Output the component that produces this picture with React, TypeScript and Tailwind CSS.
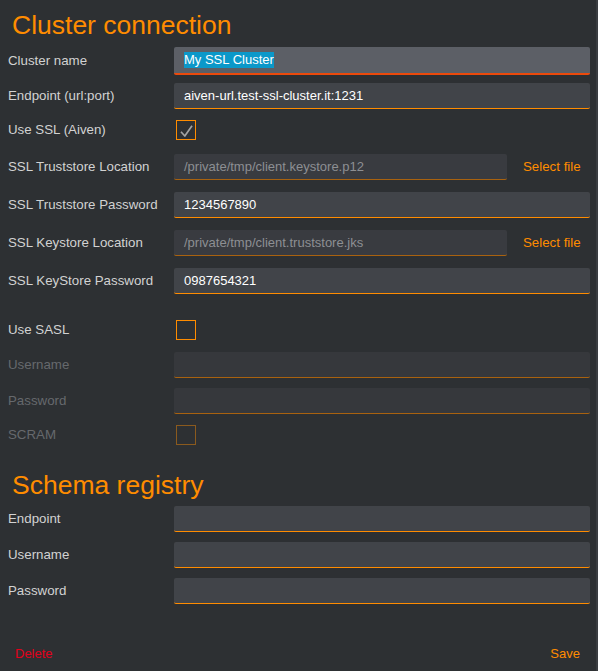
import React from 'react';

type FieldVariant = 'normal' | 'focused' | 'readonly' | 'disabled';

const fieldClasses: Record<FieldVariant, string> = {
  normal: 'h-[26px] bg-[#414449] border-b border-[#ff8c00] text-white',
  focused: 'h-[28px] bg-[#5c5f66] border-b-2 border-[#ec4a0c] text-white',
  readonly: 'h-[26px] bg-[#393b40] border-b border-[#a9620f] text-[#8d8f93]',
  disabled: 'h-[26px] bg-[#36383c] border-b border-[#a9620f] text-[#8d8f93]',
};

const Field: React.FC<{ variant?: FieldVariant; className?: string; children?: React.ReactNode }> = ({
  variant = 'normal',
  className = '',
  children,
}) => (
  <div className={`flex items-center rounded-[2px] pl-[10px] text-[13px] leading-4 ${fieldClasses[variant]} ${className}`}>
    {children}
  </div>
);

const Row: React.FC<{ label: string; disabled?: boolean; className?: string; children: React.ReactNode }> = ({
  label,
  disabled,
  className = '',
  children,
}) => (
  <div className={`flex items-center ${className}`}>
    <div className={`w-[166px] shrink-0 text-[13.3px] leading-4 ${disabled ? 'text-[#66696d]' : 'text-[#d2d2d2]'}`}>
      {label}
    </div>
    <div className="flex flex-1 items-center">{children}</div>
  </div>
);

const Checkbox: React.FC<{ checked?: boolean; disabled?: boolean }> = ({ checked, disabled }) => (
  <div
    className={`ml-[2px] flex h-5 w-5 items-center justify-center border-[1.5px] ${
      disabled ? 'border-[#8a5a1e]' : 'border-[#ff8c00]'
    }`}
  >
    {checked && (
      <svg width="17" height="17" viewBox="0 0 20 20">
        <path d="M3.5 11.5 L8 16.5 L16.5 4.5" fill="none" stroke="#a3a3a3" strokeWidth="2" strokeLinejoin="round" />
      </svg>
    )}
  </div>
);

const SelectFile: React.FC = () => (
  <span className="ml-4 text-[13.3px] leading-4 text-[#ff8c00]">Select file</span>
);

export default function App() {
  return (
    <div
      className="min-h-[671px] w-full border-r-2 border-[#3a3d41] bg-[#2d3033] pl-2 pr-[6px] pt-[11px]"
      style={{ fontFamily: '"Liberation Sans", Arial, sans-serif' }}
    >
      {/* Cluster connection */}
      <h1 className="h-7 pl-1 text-[26.5px] leading-7 font-normal text-[#ff8c00]">Cluster connection</h1>

      <Row label="Cluster name" className="mt-2">
        <Field variant="focused" className="w-full">
          <span className="bg-[#0b98c9] text-white">My SSL Cluster</span>
        </Field>
      </Row>

      <Row label="Endpoint (url:port)" className="mt-2">
        <Field className="w-full">aiven-url.test-ssl-cluster.it:1231</Field>
      </Row>

      <Row label="Use SSL (Aiven)" className="mt-[11px]">
        <Checkbox checked />
      </Row>

      <Row label="SSL Truststore Location" className="mt-[14px]">
        <Field variant="readonly" className="w-[333px]">/private/tmp/client.keystore.p12</Field>
        <SelectFile />
      </Row>

      <Row label="SSL Truststore Password" className="mt-3">
        <Field className="w-full">1234567890</Field>
      </Row>

      <Row label="SSL Keystore Location" className="mt-3">
        <Field variant="readonly" className="w-[333px]">/private/tmp/client.truststore.jks</Field>
        <SelectFile />
      </Row>

      <Row label="SSL KeyStore Password" className="mt-3">
        <Field className="w-full">0987654321</Field>
      </Row>

      {/* SASL */}
      <Row label="Use SASL" className="mt-[26px]">
        <Checkbox />
      </Row>

      <Row label="Username" disabled className="mt-3">
        <Field variant="disabled" className="w-full" />
      </Row>

      <Row label="Password" disabled className="mt-[10px]">
        <Field variant="disabled" className="w-full" />
      </Row>

      <Row label="SCRAM" disabled className="mt-[11px]">
        <Checkbox disabled />
      </Row>

      {/* Schema registry */}
      <h2 className="mt-[26px] h-7 pl-1 text-[26.5px] leading-7 font-normal text-[#ff8c00]">Schema registry</h2>

      <Row label="Endpoint" className="mt-[7px]">
        <Field className="w-full" />
      </Row>

      <Row label="Username" className="mt-[10px]">
        <Field className="w-full" />
      </Row>

      <Row label="Password" className="mt-[10px]">
        <Field className="w-full" />
      </Row>

      <div className="mt-[42px] flex items-center justify-between pl-[7px] pr-[10px] text-[13px] leading-4">
        <button className="text-[#e3001b]">Delete</button>
        <button className="text-[#ff8c00]">Save</button>
      </div>
    </div>
  );
}
